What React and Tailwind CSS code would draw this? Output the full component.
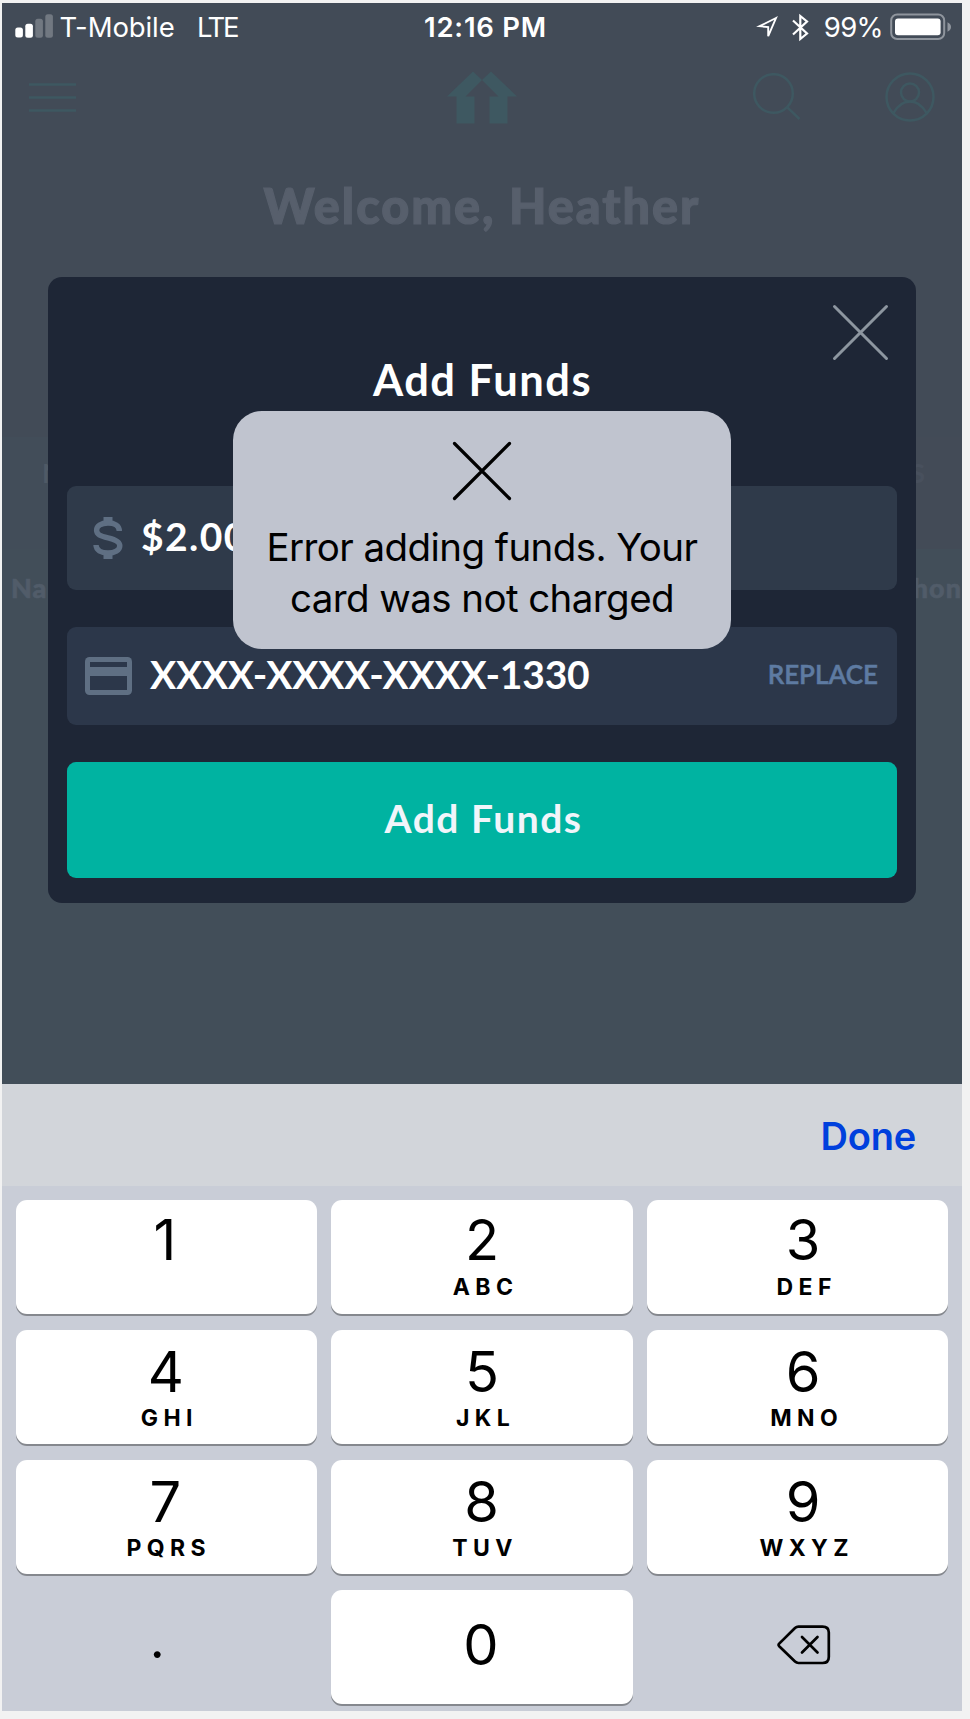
const KEYS = [
  { digit: "1", letters: "", shift: "pr-[3px]" },
  { digit: "2", letters: "ABC", shift: "" },
  { digit: "3", letters: "DEF", shift: "pl-[11px]" },
  { digit: "4", letters: "GHI", shift: "pr-[1px]" },
  { digit: "5", letters: "JKL", shift: "" },
  { digit: "6", letters: "MNO", shift: "pl-[11px]" },
  { digit: "7", letters: "PQRS", shift: "pr-[2px]" },
  { digit: "8", letters: "TUV", shift: "pr-[1px]" },
  { digit: "9", letters: "WXYZ", shift: "pl-[11px]" },
];

function StatusBar() {
  return (
    <div className="grid h-12 grid-cols-[1fr_auto_1fr] items-center text-[27.5px] leading-[48px] text-white">
      <div className="flex items-center pl-[13px]">
        <svg width="38" height="24" viewBox="0 0 38 24" className="mt-[-3px]" fill="white">
          <rect x="0.3" y="13.5" width="7.6" height="10" rx="2.5" />
          <rect x="10.3" y="9.7" width="7.6" height="14" rx="2.5" />
          <rect x="20.3" y="4.7" width="7.6" height="19" rx="2.5" opacity="0.25" />
          <rect x="30.3" y="0.3" width="7.6" height="23.4" rx="2.5" opacity="0.25" />
        </svg>
        <span className="ml-[6.5px] tracking-[-0.1px]">T-Mobile</span>
        <span className="ml-[22.5px] tracking-[-2.4px]">LTE</span>
      </div>
      <div className="pl-[7px] font-semibold tracking-[0.75px]">12:16 PM</div>
      <div className="flex items-center justify-end pr-[10px]">
        <svg width="24" height="26" viewBox="0 0 24 26" className="mt-[1px] mr-[13px]" fill="none" stroke="white" strokeWidth="1.9" strokeLinejoin="miter">
          <path d="M21 3 L4.5 11.2 L13.2 12 L13.2 21.2 Z" />
        </svg>
        <svg width="17" height="29" viewBox="0 0 17 29" className="mr-[15px]" fill="none" stroke="white" strokeWidth="2.2">
          <path d="M1 7.5 L15 20.5 L8.3 26 V3 L15 8.5 L1 21.5" />
        </svg>
        <span className="tracking-[-0.6px]">99%</span>
        <svg width="62" height="28" viewBox="0 0 62 28" className="mt-[-1px] ml-[7px]">
          <rect x="1.2" y="1.5" width="53" height="24.5" rx="6" fill="none" stroke="#8f959d" strokeWidth="2" />
          <rect x="5" y="5.4" width="45.6" height="16.8" rx="3" fill="white" />
          <path d="M57.5 9.3 Q61 11 61 14 Q61 17 57.5 18.7 Z" fill="#8f959d" />
        </svg>
      </div>
    </div>
  );
}

function AppHeader() {
  return (
    <div className="flex h-[92px] items-center text-[#3e5861]">
      <svg width="48" height="29" viewBox="0 0 48 29" className="ml-[27px]" stroke="currentColor" strokeWidth="2.4">
        <path d="M0 1.5H47M0 14.5H47M0 27.5H47" />
      </svg>
      <svg width="70" height="53" viewBox="0 0 70 53" className="ml-[370px]" fill="currentColor">
        <path d="M0 25.5 L26 0.5 L35 9 L44 0.5 L70 25.5 H60.5 V52.5 H42.5 V25.5 H51.5 L35 9 L18.5 25.5 H27.5 V52.5 H9.5 V25.5 Z" />
      </svg>
      <svg width="48" height="48" viewBox="0 0 48 48" className="ml-[236px]" fill="none" stroke="currentColor" strokeWidth="2.5">
        <circle cx="20.5" cy="20.5" r="19.3" />
        <path d="M34.3 34.3 L46.5 46" />
      </svg>
      <svg width="50" height="50" viewBox="0 0 50 50" className="ml-[84px]" fill="none" stroke="currentColor" strokeWidth="2.5">
        <circle cx="25" cy="25" r="23.5" />
        <circle cx="25" cy="20.5" r="9" />
        <path d="M8.5 41 C13 33 18.5 29.5 25 29.5 C31.5 29.5 37 33 41.5 41" />
      </svg>
    </div>
  );
}

function DimmedPage() {
  return (
    <div className="flex h-full flex-col bg-[#424b57]">
      <StatusBar />
      <AppHeader />
      <h1 className="mt-[32px] text-center font-['Lato',sans-serif] text-[48.5px] leading-[60px] font-black tracking-[2px] text-[#575f6c] [-webkit-text-stroke:1.2px_#575f6c]">
        Welcome, Heather
      </h1>
      <div className="mt-[202px] flex h-28 font-['Lato',sans-serif] text-[27px] leading-[30px] font-bold">
        <div className="flex-1 bg-[#424d59] pt-[21px] pl-10 text-[#4f5a66]">N</div>
        <div className="flex-1 bg-[#434b57] pt-[21px] pr-[37px] text-right text-[#48505d]">S</div>
      </div>
      <div className="flex grow justify-between bg-[#424e59] pt-6 pl-[9px] font-['Lato',sans-serif] text-[27px] leading-[30px] font-black tracking-[1px] text-[#515c69] [-webkit-text-stroke:0.6px_#515c69]">
        <span>Na</span>
        <span>hon</span>
      </div>
    </div>
  );
}

function AddFundsModal() {
  return (
    <div className="absolute top-[274px] left-[46px] flex h-[626px] w-[868px] flex-col rounded-[14px] bg-[#1e2636] px-[19px] pt-[76px] font-['Lato',sans-serif] font-bold">
      <button className="absolute top-[27px] right-[27px]" aria-label="Close">
        <svg width="57" height="57" viewBox="0 0 57 57" fill="none" stroke="#8d96a0" strokeWidth="3" strokeLinecap="round">
          <path d="M2.5 2.5 L54.5 54.5 M54.5 2.5 L2.5 54.5" />
        </svg>
      </button>
      <h2 className="pl-[1px] text-center text-[43.5px] leading-[52px] tracking-[1.5px] text-white">Add Funds</h2>
      <div className="mt-[81px] flex h-[104px] items-center rounded-[9px] bg-[#2f3a4a] pl-[26px]">
        <svg width="30" height="42" viewBox="0 0 30 42" className="mt-[-1px]" fill="none" stroke="#5f6f83" strokeWidth="5.4">
          <path d="M26.3 14 C26.3 8.5 21.5 6 15 6 C8 6 3.6 9 3.6 13.3 C3.6 17.5 7 19 15 20.8 C23 22.6 26.8 24.8 26.8 28.8 C26.8 33.4 21.5 36 15 36 C8 36 3.2 33.2 3 28" />
          <path d="M15 0 V6 M15 36 V42" strokeWidth="9" />
        </svg>
        <span className="mt-[-4px] ml-[18px] text-[39px] leading-[52px] tracking-[1.4px] text-white">$2.00</span>
      </div>
      <div className="mt-[37px] flex h-[98px] items-center rounded-[9px] bg-[#2c374a] pr-[19px] pl-[18px]">
        <svg width="47" height="38" viewBox="0 0 47 38">
          <rect width="47" height="38" rx="4.5" fill="#5f6f83" />
          <path d="M5 5H42V10H5ZM5 19H42V33H5Z" fill="#2c374a" />
        </svg>
        <span className="mt-[-5px] ml-[18px] grow text-[39px] leading-[52px] tracking-[-0.2px] text-white">XXXX-XXXX-XXXX-1330</span>
        <button className="mt-[-4px] text-[26px] leading-[30px] font-semibold text-[#5e7ba2] [-webkit-text-stroke:0.5px_#5e7ba2]">REPLACE</button>
      </div>
      <button className="mt-[37px] h-[116px] rounded-[9px] bg-[#00b3a1] pb-1 pl-[3px] text-[39px] leading-[52px] tracking-[1.5px] text-[#f1f5fa]">
        Add Funds
      </button>
    </div>
  );
}

function ErrorToast() {
  return (
    <div className="absolute top-[408px] left-[231px] flex h-[238px] w-[498px] flex-col items-center rounded-[29px] bg-[#c0c4cf] pt-[30px] text-black">
      <svg width="60" height="60" viewBox="0 0 60 60" fill="none" stroke="black" strokeWidth="3.2" strokeLinecap="round">
        <path d="M2.5 2.5 L57.5 57.5 M57.5 2.5 L2.5 57.5" />
      </svg>
      <p className="mt-[21px] text-center text-[38.5px] leading-[51px] tracking-[-0.58px]">
        Error adding funds. Your
        <br />
        card was not charged
      </p>
    </div>
  );
}

function Key({ digit, letters, shift, first }) {
  return (
    <button className={`flex h-[114px] flex-col items-center rounded-[11px] bg-white shadow-[0_2px_0_#85888e] ${shift}`}>
      <span className={first ? "mt-[10px] text-[56px] leading-[60px]" : "mt-[12px] text-[56px] leading-[60px]"}>{digit}</span>
      <span className={first ? "mt-[5px] pl-[7px] text-[23px] leading-6 font-bold tracking-[5.4px]" : "mt-[4px] pl-[7px] text-[23px] leading-6 font-bold tracking-[5.4px]"}>
        {letters}
      </span>
    </button>
  );
}

function Keyboard() {
  return (
    <div className="flex grow flex-col bg-[#c9cdd7] text-black">
      <div className="flex h-[102px] justify-end bg-[#d2d5da] pt-[26px] pr-[46px]">
        <button className="h-[52px] text-[38px] leading-[52px] font-semibold tracking-[-0.2px] text-[#0040dd]">Done</button>
      </div>
      <div className="grid grid-cols-3 gap-x-[14px] gap-y-4 px-[13.5px] pt-[14px]">
        {KEYS.map((k, i) => (
          <Key key={k.digit} digit={k.digit} letters={k.letters} shift={k.shift} first={i < 3} />
        ))}
        <button className="flex h-[114px] justify-center pt-[20px] pr-[18px] text-[52px] leading-[60px]">.</button>
        <button className="flex h-[114px] justify-center rounded-[11px] bg-white pt-[25px] pr-[2px] text-[56px] leading-[60px] shadow-[0_2px_0_#85888e]">0</button>
        <button className="flex h-[114px] justify-center pt-[35px] pl-3" aria-label="Delete">
          <svg width="54" height="40" viewBox="0 0 54 40" fill="none" stroke="black" strokeWidth="2.7" strokeLinecap="round" strokeLinejoin="round">
            <path d="M21.5 1.6 H45.5 Q51.8 1.6 51.8 7.5 V32 Q51.8 38 45.5 38 H21.5 Q19.5 38 18 36.6 L2.2 21.2 Q1 19.9 2.2 18.6 L18 3 Q19.5 1.6 21.5 1.6 Z" />
            <path d="M25 12 L40.5 27.5 M40.5 12 L25 27.5" />
          </svg>
        </button>
      </div>
    </div>
  );
}

export default function App() {
  return (
    <div className="h-[1719px] w-[970px] overflow-hidden bg-[#f2f2f2] pt-[3px] pl-[2px] font-['Inter',sans-serif]">
      <div className="relative flex h-[1708px] w-[960px] flex-col overflow-hidden">
        <div className="h-[1081px]">
          <DimmedPage />
        </div>
        <Keyboard />
        <AddFundsModal />
        <ErrorToast />
      </div>
    </div>
  );
}
